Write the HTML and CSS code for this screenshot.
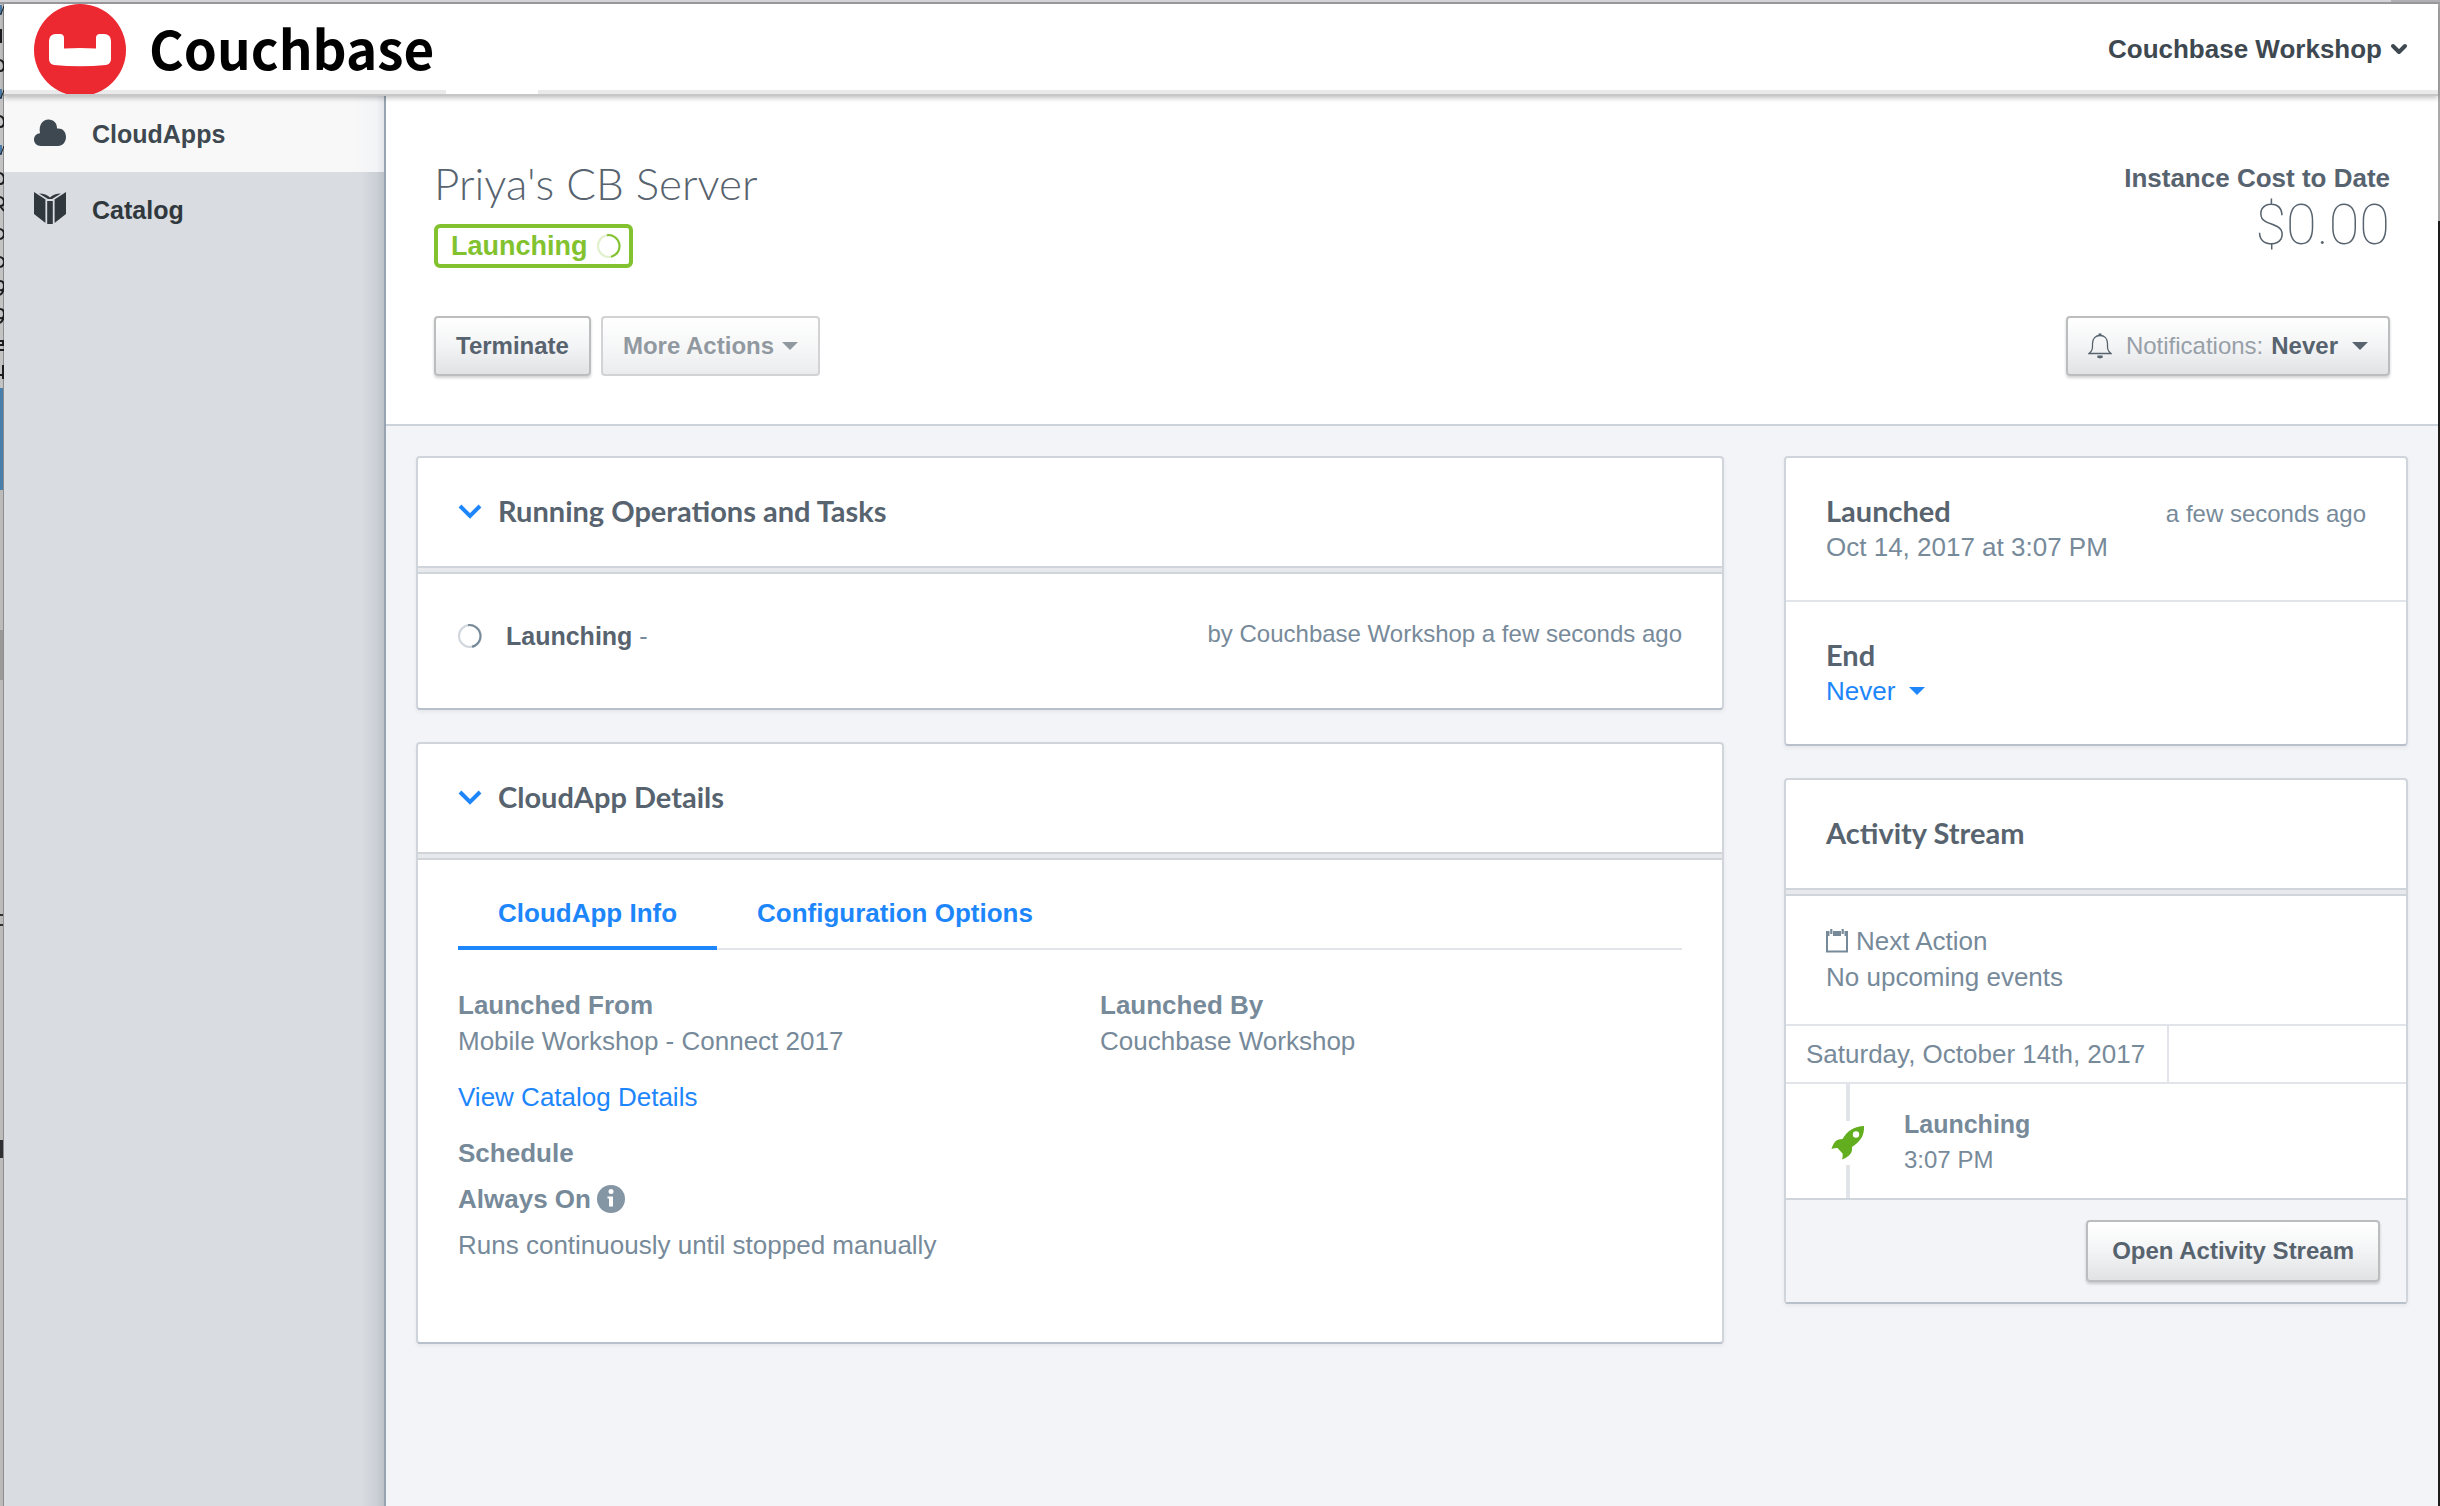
FILE: index.html
```html
<!DOCTYPE html>
<html lang="en">
<head>
<meta charset="utf-8">
<title>Priya's CB Server - Couchbase</title>
<link rel="stylesheet" href="styles.css">
</head>
<body>
<div class="desktop">
  <svg class="edge-marks" width="4" height="400" viewBox="0 0 4 400" aria-hidden="true"><path d="M1 29v14M0 60q4 1 4 6t-4 5M0 116q4 1 4 6t-4 5M0 173q4 1 4 6t-4 5M0 197q4 1 4 5t-4 4l4 5M0 229q4 1 4 5t-4 5M0 257q4 1 4 5t-4 5M0 281q4 0 4 5t-4 4M4 286q0 6-4 9M0 309q4 0 4 5t-4 4M4 314q0 6-4 9M0 341h3v4H0M0 350h4M0 375h4M3 365v14" fill="none" stroke="#1c1c20" stroke-width="2"/><path d="M0 5h2v10H0zM0 89h2v10H0zM0 145h2v10H0z" fill="#4a7ba6"/><path d="M0 14h1l3-8M0 98h1l3-8M0 154h1l3-8" fill="none" stroke="#1c1c20" stroke-width="1"/></svg>
  <div class="app">
    <header class="topbar">
      <a class="brand" href="#">
        <svg class="brand-mark" viewBox="0 0 92 90" aria-hidden="true">
          <ellipse cx="46" cy="46" rx="46" ry="46" fill="#ec2830"/>
          <path d="M21 30h5q4 0 4 4v10.500q16-1 32 0V34q0-4 4-4h5q6 1 6 7v18q0 5-5 6q-26 2.500-52 0q-5-1-5-6V37q0-6 6-7z" fill="#fff"/>
        </svg>
        <span class="brand-name">Couchbase</span>
      </a>
      <button class="account" type="button">Couchbase Workshop
        <svg width="18" height="12" viewBox="0 0 18 12" aria-hidden="true"><path d="M3 3l6 6 6-6" fill="none" stroke="currentColor" stroke-width="4" stroke-linecap="round" stroke-linejoin="round"/></svg>
      </button>
    </header>
    <div class="body">
      <nav class="sidebar">
        <a class="nav-item active" href="#">
          <svg width="32" height="32" viewBox="0 0 32 32" aria-hidden="true"><path d="M7 28C2.500 28 0 25 0 21.500c0-3.500 2.500-6 6-6.300C4.500 7 8.500 1.500 14.500 1.500c5 0 8.500 3.500 8.500 8.500v.600c5-.800 9 2.800 9 8.400 0 5-3.500 9-8 9z" fill="#3e4850"/></svg>
          CloudApps</a>
        <a class="nav-item" href="#">
          <svg width="32" height="36" viewBox="0 0 32 36" aria-hidden="true"><path d="M0 0l11.500 7.500V31L0 22zM32 0L20.500 7.500V31L32 22zM13.200 9h5.600v23h-5.600zM5 1.500q7 0 11 4 4-4 11-4l-9 5.500h-4z" fill="#30383d"/><path d="M12.400 8v24M19.600 8v24" stroke="#d9dce1" stroke-width="1.200"/></svg>
          Catalog</a>
      </nav>
      <main class="main">
        <section class="page-head">
          <div class="head-row">
            <div>
              <h1 class="title">Priya's CB Server</h1>
              <span class="badge">Launching
                <svg width="24" height="24" viewBox="0 0 24 24" fill="none" stroke="#82c22f" stroke-width="2" aria-hidden="true"><circle cx="12" cy="12" r="11" opacity=".25"/><path d="M10 1.200A11 11 0 0 1 14 22.800"/></svg>
              </span>
            </div>
            <div class="cost">
              <div class="cost-label">Instance Cost to Date</div>
              <div class="cost-value">$0.00</div>
            </div>
          </div>
          <div class="actions">
            <button class="btn" type="button">Terminate</button>
            <button class="btn" type="button" disabled>More Actions <i class="caret"></i></button>
            <button class="btn notify" type="button">
              <svg class="bell" width="24" height="26" viewBox="0 0 24 26" fill="none" stroke="currentColor" stroke-width="1.300" aria-hidden="true"><path d="M1 20.500h22c-4-3-3.500-6-3.500-10 0-5-3-8-7.500-8s-7.500 3-7.500 8c0 4 .500 7-3.500 10z"/><path d="M10.500 1.500h3M9.500 23.500h5l-2.500 1z" stroke-width="2"/></svg>
              <span class="soft">Notifications:</span> Never <i class="caret wide"></i>
            </button>
          </div>
        </section>
        <div class="columns">
          <div class="column">
            <section class="card">
              <h2 class="card-head"><button class="toggle" type="button"><svg width="24" height="16" viewBox="0 0 24 16" aria-hidden="true"><path d="M2 3l10 10 10-10" fill="none" stroke="#1d86fb" stroke-width="4"/></svg>Running Operations and Tasks</button></h2>
              <div class="task">
                <svg width="24" height="24" viewBox="0 0 24 24" fill="none" stroke="#778a9a" stroke-width="2" aria-hidden="true"><circle cx="12" cy="12" r="11" opacity=".35"/><path d="M10 1.200A11 11 0 0 1 14 22.800"/></svg>
                <div class="task-name"><b>Launching</b> -</div>
                <div class="small task-by">by Couchbase Workshop a few seconds ago</div>
              </div>
            </section>
            <section class="card">
              <h2 class="card-head"><button class="toggle" type="button"><svg width="24" height="16" viewBox="0 0 24 16" aria-hidden="true"><path d="M2 3l10 10 10-10" fill="none" stroke="#1d86fb" stroke-width="4"/></svg>CloudApp Details</button></h2>
              <div class="details">
                <div class="tabs" role="tablist">
                  <button class="tab selected" type="button" role="tab" aria-selected="true">CloudApp Info</button>
                  <button class="tab" type="button" role="tab" aria-selected="false">Configuration Options</button>
                </div>
                <div class="info">
                  <div>
                    <div><b>Launched From</b></div>
                    <div>Mobile Workshop - Connect 2017</div>
                    <div class="spaced"><a class="link" href="#">View Catalog Details</a></div>
                    <div class="spaced"><b>Schedule</b></div>
                    <div class="near always"><b>Always On</b>
                      <svg width="28" height="28" viewBox="0 0 28 28" aria-hidden="true"><circle cx="14" cy="14" r="14" fill="#8495a4"/><circle cx="14" cy="6.500" r="2.500" fill="#fff"/><path d="M10.500 11.500h5.500v10h-4v-8h-1.500z" fill="#fff"/></svg>
                    </div>
                    <div class="near">Runs continuously until stopped manually</div>
                  </div>
                  <div>
                    <div><b>Launched By</b></div>
                    <div>Couchbase Workshop</div>
                  </div>
                </div>
              </div>
            </section>
          </div>
          <div class="column">
            <section class="card">
              <div class="dates">
                <div class="dates-row"><h3 class="label">Launched</h3><span class="small">a few seconds ago</span></div>
                <div>Oct 14, 2017 at 3:07 PM</div>
              </div>
              <div class="dates">
                <h3 class="label">End</h3>
                <button class="never" type="button">Never <i class="caret wide"></i></button>
              </div>
            </section>
            <section class="card">
              <h2 class="card-head">Activity Stream</h2>
              <div class="next">
                <div class="next-title"><svg width="22" height="24" viewBox="0 0 22 24" fill="none" stroke="#778a9a" aria-hidden="true"><path d="M1 2v20.500h20V2" stroke-width="2"/><path d="M0 4.500h3.500M7 4.500h8M18.500 4.500H22" stroke-width="5"/><path d="M5.300 0v5M16.700 0v5" stroke-width="2.200"/></svg>Next Action</div>
                <div>No upcoming events</div>
              </div>
              <div class="day"><span class="day-name">Saturday, October 14th, 2017</span></div>
              <div class="event">
                <div class="rail">
                  <svg width="34" height="34" viewBox="0 0 34 34" aria-hidden="true"><path d="M33 0c.500 9-3 15-12 21 .500 5-1 9-10 12.500.500-2 1-4 .500-6L6.500 22c-2 0-4 0-6 1 2-6 4-10 11-10C16 5 24 0 33 0z" fill="#62ae1f"/><circle cx="25" cy="8.500" r="3.200" fill="#fff"/></svg>
                </div>
                <div class="event-text"><b>Launching</b><div class="small">3:07 PM</div></div>
              </div>
              <div class="card-foot"><button class="btn" type="button">Open Activity Stream</button></div>
            </section>
          </div>
        </div>
      </main>
    </div>
  </div>
</div>
</body>
</html>
```
FILE: styles.css
```css
* { box-sizing: border-box; }

body {
  margin: 0;
  font-family: "Liberation Sans", Arial, sans-serif;
  font-size: 26px;
  line-height: 36px;
  color: #778a9a;
}

h1, h2, h3 { margin: 0; font-weight: 400; }
a { text-decoration: none; }
button { font: inherit; color: inherit; background: none; border: 0; padding: 0; margin: 0; }
svg { display: block; flex: none; }

/* slivers of the desktop around the window */
.desktop {
  position: relative;
  min-height: 100vh;
  display: flex;
  padding: 4px 2px 0 4px;
  background:
    linear-gradient(90deg, #d5d5d8 98%, #b1b1b4 98%) top / 100% 2px no-repeat,
    linear-gradient(#9d9da1, #9d9da1) top / 100% 4px no-repeat,
    linear-gradient(#a9a9a9 221px, #1e1b1b 221px) right / 2px 100% no-repeat,
    linear-gradient(90deg, transparent 3px, #8e8d8e 3px) left / 4px 100% no-repeat,
    linear-gradient(#c4c3c3 388px, #4880ab 388px 490px, #bdbaba 490px 630px, #9a9898 630px 680px, #bdbaba 680px 914px, #2e3234 914px 916px, #bdbaba 916px 924px, #2e3234 924px 926px, #bdbaba 926px 1140px, #2f2f33 1140px 1158px, #bdbaba 1158px);
}
.edge-marks { position: absolute; left: 0; top: 0; }

.app { flex: 1; display: flex; flex-direction: column; background: #f3f4f7; min-width: 0; }

.topbar {
  display: flex;
  justify-content: space-between;
  height: 92px;
  padding: 0 30px;
  border-bottom: 2px solid #c7c7c7;
  background:
    linear-gradient(90deg, #eaeaea 442px, #fff 442px 534px, #eaeaea 534px) bottom / 100% 4px no-repeat,
    #fff;
  box-shadow: 0 2px 5px rgba(0, 0, 0, .25);
  z-index: 1;
}
.brand { display: flex; gap: 23px; color: #000; }
.brand-mark { width: 92px; height: 90px; }
.brand-name { font: 700 53px/86px "Noto Sans CJK SC", "Open Sans", sans-serif; }
.account { display: flex; align-items: center; gap: 8px; font-weight: 700; color: #3e4850; }

.body { flex: 1; display: flex; }

.sidebar {
  width: 382px;
  flex: none;
  border-right: 2px solid #97a3b0;
  background: linear-gradient(90deg, #d9dce1 94%, #cbd0d6 98%, #bcc2c9);
}
.nav-item {
  display: flex;
  align-items: center;
  gap: 26px;
  height: 76px;
  padding-left: 30px;
  font-size: 25px;
  font-weight: 700;
  color: #30383d;
}
.nav-item.active { background: linear-gradient(90deg, #f8f8f8 92%, #f3f4f7 98%, #e3e5e8); color: #3e4850; }

.main { flex: 1; min-width: 0; }

.page-head { padding: 60px 48px 48px; background: #fff; border-bottom: 2px solid #ccd2da; }
.head-row { display: flex; justify-content: space-between; }
.title { font: 300 44px/54px Lato, sans-serif; color: #57636e; }
.badge {
  display: inline-flex;
  align-items: center;
  gap: 9px;
  height: 44px;
  margin-top: 14px;
  padding: 0 8px 0 13px;
  border: 4px solid #82c22f;
  border-radius: 6px;
  font-size: 27px;
  font-weight: 700;
  color: #82c22f;
}
.cost { padding-top: 4px; text-align: right; color: #57636e; }
.cost-label { font-weight: 700; }
.cost-value { font: 100 56px/58px Roboto, sans-serif; }

.actions { display: flex; gap: 10px; margin-top: 48px; }
.btn {
  display: flex;
  align-items: center;
  gap: 8px;
  height: 60px;
  padding: 0 20px;
  border: 2px solid #bcbdbf;
  border-radius: 4px;
  background: linear-gradient(#fff, #f3f4f5 50%, #e1e2e4);
  box-shadow: 0 2px 3px rgba(0, 0, 0, .18);
  font-size: 24px;
  font-weight: 700;
  color: #57636e;
}
.btn:disabled { opacity: .65; box-shadow: none; }
.notify { margin-left: auto; }
.bell { margin-right: 6px; }
.soft { font-weight: 400; color: #97a0a8; }
.caret {
  border: 8px solid transparent;
  border-top-color: currentColor;
  border-bottom: 0;
}
.caret.wide { margin-left: 6px; }

.columns {
  display: grid;
  grid-template-columns: minmax(0, 109fr) minmax(0, 52fr);
  gap: 60px;
  padding: 30px;
}
.column { display: flex; flex-direction: column; gap: 32px; }
.card {
  border: 2px solid #d0d5dc;
  border-bottom-color: #b8c0cb;
  border-radius: 4px;
  background: #fff;
  box-shadow: 0 2px 4px rgba(0, 0, 0, .06);
}
.card-head {
  display: flex;
  align-items: center;
  height: 116px;
  padding: 0 40px 8px;
  border-bottom: 2px solid #d0d5dc;
  box-shadow: inset 0 -4px #e8e9ec, inset 0 -6px #d0d5dc;
  font: 700 29px/36px Lato, sans-serif;
  color: #57636e;
}
.toggle { display: flex; align-items: center; gap: 16px; }
.small { font-size: 24px; }

.task { display: flex; padding: 44px 40px 54px; }
.task svg { margin: 6px 24px 0 0; }
.task-name { font-size: 25px; }
.task-name b { color: #57636e; }
.task-by { margin-left: auto; line-height: 32px; }

.details { padding: 0 40px 79px; }
.tabs { display: flex; padding-top: 35px; box-shadow: inset 0 -2px #e1e4e8; }
.tab { padding: 0 40px 15px; border-bottom: 4px solid transparent; font-weight: 700; color: #1d86fb; }
.tab.selected { border-bottom-color: #1d86fb; }
.info { display: grid; grid-template-columns: 1fr 1fr; gap: 60px; padding-top: 37px; }
.spaced { margin-top: 20px; }
.near { margin-top: 10px; }
.always { display: flex; align-items: center; gap: 6px; }
.link { color: #1d86fb; }

.dates { padding: 35px 40px; }
.dates + .dates { border-top: 2px solid #e1e4e8; }
.dates-row { display: flex; justify-content: space-between; align-items: baseline; height: 36px; }
.label { font: 700 29px/36px Lato, sans-serif; color: #57636e; }
.never { display: flex; align-items: center; gap: 8px; color: #1d86fb; }

.next { padding: 27px 40px 29px; }
.next-title { display: flex; align-items: center; gap: 8px; }
.day { display: flex; border: solid #e1e4e8; border-width: 2px 0; }
.day-name { padding: 0 22px 0 20px; line-height: 56px; border-right: 2px solid #e1e4e8; }
.event { display: flex; font-size: 25px; border-bottom: 2px solid #d0d5dc; }
.rail {
  display: flex;
  justify-content: center;
  align-items: center;
  width: 118px;
  padding: 4px 0 0 6px;
  background: linear-gradient(#e1e4e8 37px, #fff 37px 81px, #e1e4e8 81px) 60px 0 / 4px 100% no-repeat;
}
.event-text { padding: 22px 0 20px; }
.card-foot { display: flex; justify-content: flex-end; padding: 20px 26px; background: #f3f4f7; }
.card-foot .btn { height: 62px; padding: 0 24px; }
```
